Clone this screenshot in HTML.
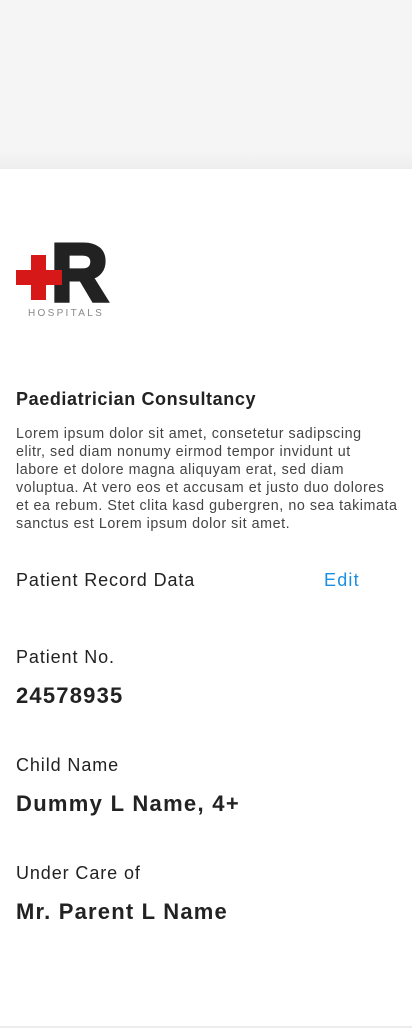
<!DOCTYPE html>
<html><head><meta charset="utf-8">
<style>
html,body{margin:0;padding:0;}
body{width:412px;height:1028px;position:relative;background:#fff;font-family:"Liberation Sans",sans-serif;color:#222;overflow:hidden;}
.top{position:absolute;left:0;top:0;width:412px;height:169px;background:linear-gradient(#f5f5f5 0,#f5f5f5 150px,#eeeeee 169px);}
.t{position:absolute;left:16px;white-space:nowrap;}
.bot{position:absolute;left:0;top:1026px;width:412px;height:2px;background:#ececec;}
</style></head><body>
<div class="top"></div>
<svg style="position:absolute;left:0;top:230px" width="140" height="100">
<text x="51" y="71" font-family="Liberation Sans" font-weight="bold" font-size="82" fill="#222" stroke="#222" stroke-width="4" textLength="57" lengthAdjust="spacingAndGlyphs">R</text>
<rect x="31" y="25" width="15" height="45" fill="#d71818"/>
<rect x="16" y="40" width="46" height="15" fill="#d71818"/>
<text x="28" y="86" font-family="Liberation Sans" font-size="10" letter-spacing="2.3" fill="#888">HOSPITALS</text>
</svg>
<div class="t" style="top:389px;font-size:18px;font-weight:bold;letter-spacing:0.6px;">Paediatrician Consultancy</div>
<div class="t" style="top:425px;font-size:14.3px;line-height:18px;color:#444;letter-spacing:0.55px;">Lorem ipsum dolor sit amet, consetetur sadipscing<br>elitr, sed diam nonumy eirmod tempor invidunt ut<br>labore et dolore magna aliquyam erat, sed diam<br>voluptua. At vero eos et accusam et justo duo dolores<br>et ea rebum. Stet clita kasd gubergren, no sea takimata<br>sanctus est Lorem ipsum dolor sit amet.</div>
<div class="t" style="top:570px;font-size:18px;letter-spacing:0.9px;">Patient Record Data</div>
<div class="t" style="left:324px;top:570px;font-size:18px;color:#1a8fe3;letter-spacing:1.2px;">Edit</div>
<div class="t" style="top:647px;font-size:18px;letter-spacing:0.9px;">Patient No.</div>
<div class="t" style="top:683px;font-size:22px;font-weight:bold;letter-spacing:1.2px;">24578935</div>
<div class="t" style="top:755px;font-size:18px;letter-spacing:0.9px;">Child Name</div>
<div class="t" style="top:791px;font-size:22px;font-weight:bold;letter-spacing:1.3px;">Dummy L Name, 4+</div>
<div class="t" style="top:863px;font-size:18px;letter-spacing:0.9px;">Under Care of</div>
<div class="t" style="top:899px;font-size:22px;font-weight:bold;letter-spacing:1.2px;">Mr. Parent L Name</div>
<div class="bot"></div>
</body></html>
